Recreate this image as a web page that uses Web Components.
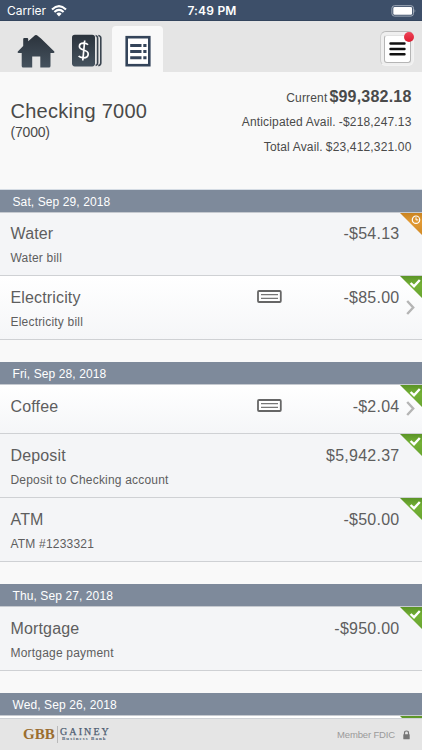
<!DOCTYPE html>
<html lang="en">
<head>
<meta charset="utf-8">
<meta name="viewport" content="width=device-width, initial-scale=1">
<title>Checking 7000</title>
<style>
  html, body {
    margin: 0;
    height: 100%;
    overflow: hidden;
    background: #f9f9f9;
    font-family: "Liberation Sans", Arial, sans-serif;
  }
</style>
</head>
<body>
<bank-app>
  <status-bar slot="top"></status-bar>
  <nav-tabs slot="top"></nav-tabs>
  <account-summary name="Checking 7000" number="(7000)">
    <balance-line label="Current" amount="$99,382.18" main></balance-line>
    <balance-line label="Anticipated Avail." amount="-$218,247.13"></balance-line>
    <balance-line label="Total Avail." amount="$23,412,321.00"></balance-line>
  </account-summary>
  <day-group date="Sat, Sep 29, 2018">
    <transaction-row name="Water" amount="-$54.13" memo="Water bill" status="pending"></transaction-row>
    <transaction-row name="Electricity" amount="-$85.00" memo="Electricity bill" status="cleared" check></transaction-row>
  </day-group>
  <day-group date="Fri, Sep 28, 2018">
    <transaction-row name="Coffee" amount="-$2.04" status="cleared" check></transaction-row>
    <transaction-row name="Deposit" amount="$5,942.37" memo="Deposit to Checking account" status="cleared"></transaction-row>
    <transaction-row name="ATM" amount="-$50.00" memo="ATM #1233321" status="cleared"></transaction-row>
  </day-group>
  <day-group date="Thu, Sep 27, 2018">
    <transaction-row name="Mortgage" amount="-$950.00" memo="Mortgage payment" status="cleared"></transaction-row>
  </day-group>
  <day-group date="Wed, Sep 26, 2018">
    <transaction-row status="cleared" check></transaction-row>
  </day-group>
  <bank-footer slot="bottom"></bank-footer>
</bank-app>

<script>
class BankApp extends HTMLElement {
  constructor () {
    super()
    this.shadow = this.attachShadow({ mode: 'open' })
  }

  connectedCallback () {
    this.shadow.innerHTML =
      /*html*/`
      <style>
        :host {
          display: flex;
          flex-direction: column;
          height: 100vh;
        }

        main {
          flex: 1;
          min-height: 0;
          overflow: hidden;
        }
      </style>

      <slot name="top"></slot>
      <main><slot></slot></main>
      <slot name="bottom"></slot>`
  }
}

class StatusBar extends HTMLElement {
  constructor () {
    super()
    this.shadow = this.attachShadow({ mode: 'open' })
  }

  connectedCallback () {
    this.shadow.innerHTML =
      /*html*/`
      <style>
        :host {
          display: grid;
          grid-template-columns: 1fr auto 1fr;
          align-items: center;
          box-sizing: border-box;
          height: 21px;
          padding: 1px 5px 0 7px;
          background: #3d4f69;
          border-bottom: 1px solid #33445d;
          color: #fff;
          font-family: Inter, "Liberation Sans", sans-serif;
          font-size: 12px;
        }

        .carrier {
          display: flex;
          align-items: center;
          gap: 5px;
          letter-spacing: -.05px;
        }

        .time {
          font-weight: 600;
          letter-spacing: .2px;
        }

        .battery {
          justify-self: end;
        }

        svg {
          display: block;
        }
      </style>

      <div class="carrier">
        <span>Carrier</span>
        <svg width="16" height="12" viewBox="0 0 16 12">
          <g fill="none" stroke="#fff" stroke-width="2.1">
            <path d="M1 4.4Q8-2 15 4.4"/>
            <path d="M3.4 7Q8 2.8 12.6 7"/>
          </g>
          <path d="M5.4 8.7Q8 6.5 10.6 8.7L8 11.4Z" fill="#fff"/>
        </svg>
      </div>
      <div class="time">7:49 PM</div>
      <svg class="battery" width="26" height="12" viewBox="0 0 26 12">
        <rect x=".9" y=".7" width="21.6" height="10.4" rx="2.6" fill="none" stroke="#a2acba"/>
        <rect x="2.3" y="2.1" width="18.8" height="7.6" rx="1.3" fill="#fff"/>
        <path d="M23.6 4Q25.2 5.9 23.6 7.8Z" fill="#a2acba"/>
      </svg>`
  }
}

class NavTabs extends HTMLElement {
  constructor () {
    super()
    this.shadow = this.attachShadow({ mode: 'open' })
  }

  connectedCallback () {
    this.shadow.innerHTML =
      /*html*/`
      <style>
        :host {
          display: flex;
          align-items: flex-end;
          box-sizing: border-box;
          height: 51px;
          padding: 0 8px 0 10px;
          background: #e5e5e5;
        }

        .tab {
          display: flex;
          justify-content: center;
          box-sizing: border-box;
          width: 51px;
          height: 46px;
          padding-top: 8px;
          border-radius: 4px 4px 0 0;
        }

        .tab.active {
          background: #f9f9f9;
        }

        .menu {
          position: relative;
          display: flex;
          align-items: center;
          justify-content: center;
          box-sizing: border-box;
          width: 34px;
          height: 35px;
          margin: 0 0 6px auto;
          border: 1px solid #f3f3f3;
          border-top-color: #b9b9b9;
          border-left-color: #cfcfcf;
          border-radius: 6px;
          background: #efefef;
        }

        .menu div {
          display: flex;
          align-items: center;
          justify-content: center;
          box-sizing: border-box;
          width: 27px;
          height: 28px;
          border: 1px solid #b5b5b5;
          border-top-color: #e2e2e2;
          border-radius: 3px;
          background: #fff;
        }

        .badge {
          position: absolute;
          top: 0;
          right: -1px;
          width: 10px;
          height: 10px;
          border-radius: 50%;
          background: linear-gradient(#ee4458, #db1c30);
        }

        svg {
          display: block;
        }
      </style>

      <svg width="0" height="0" style="position: absolute">
        <linearGradient id="ink" x2="0" y2="1">
          <stop stop-color="#2b333c"/>
          <stop offset="1" stop-color="#45525e"/>
        </linearGradient>
      </svg>
      <div class="tab">
        <svg width="38" height="34" viewBox="0 0 38 34">
          <path fill="url(#ink)" d="M18 1.2Q19 .7 20 1.2L24 4.6L37.3 17.5Q38 18.8 36.5 19H33.5V32Q33.5 33.6 32 33.6H23.3V22.5H15.2V33.6H6.2Q4.7 33.6 4.7 32V19H1.5Q0 18.8.8 17.5L6.2 12V5Q6.2 4 7.2 4H10.2Q11.2 4 11.2 5V7.2Z"/>
        </svg>
      </div>
      <div class="tab">
        <svg width="30" height="33" viewBox="0 0 30 33">
          <rect y=".8" width="23" height="31.6" rx="2.8" fill="url(#ink)"/>
          <path d="M23.6 1.5Q25.6 2 25.6 4V29Q25.6 31 23.6 31.6M26.3 1.5Q28.8 2 28.8 4V29Q28.8 31 26.3 31.6" fill="none" stroke="#3a444f" stroke-width="1.6"/>
          <path d="M16 10.8C15 9.6 13.3 9.2 11.6 9.2C9 9.2 7.4 10.6 7.4 12.5C7.4 17 16.2 15 16.2 19.9C16.2 22.3 14.2 23.8 11.4 23.8C9.4 23.8 7.6 23.2 6.6 22M12.7 6.5L10.8 26.5" fill="none" stroke="#fff" stroke-width="1.7"/>
        </svg>
      </div>
      <div class="tab active">
        <svg width="26" height="33" viewBox="0 0 26 33">
          <rect x="1.7" y="3.2" width="22.6" height="28" fill="#fff" stroke="#34445a" stroke-width="2.6"/>
          <path d="M5.2 11.6H16.5M18.3 11.6H21.5M5.2 17.6H16.5M18.3 17.6H21.5M5.2 23.8H16.5M18.3 23.8H21.5" stroke="#34445a" stroke-width="3"/>
        </svg>
      </div>
      <div class="menu">
        <div>
          <svg width="17" height="15" viewBox="0 0 17 15">
            <path d="M1.5 2.5H15.5M1.5 8H15.5M1.5 13.3H15.5" stroke="#111" stroke-width="2.4" stroke-linecap="round"/>
          </svg>
        </div>
        <span class="badge"></span>
      </div>`
  }
}

class AccountSummary extends HTMLElement {
  constructor () {
    super()
    this.shadow = this.attachShadow({ mode: 'open' })
  }

  connectedCallback () {
    this.shadow.innerHTML =
      /*html*/`
      <style>
        :host {
          display: flex;
          justify-content: space-between;
          box-sizing: border-box;
          height: 118px;
          padding: 0 10.5px;
          border-bottom: 1px solid #d5dce4;
          color: #4a4a4a;
        }

        .account {
          padding-top: 27px;
        }

        h1 {
          margin: 0;
          font-size: 20px;
          font-weight: 400;
          line-height: 24px;
          letter-spacing: .25px;
        }

        .number {
          font-size: 14px;
          line-height: 18px;
          letter-spacing: -.2px;
        }

        .balances {
          display: flex;
          flex-direction: column;
          align-items: flex-end;
          padding-top: 12px;
        }
      </style>

      <div class="account">
        <h1>${this.getAttribute('name')}</h1>
        <div class="number">${this.getAttribute('number')}</div>
      </div>
      <div class="balances"><slot></slot></div>`
  }
}

class BalanceLine extends HTMLElement {
  constructor () {
    super()
    this.shadow = this.attachShadow({ mode: 'open' })
  }

  connectedCallback () {
    this.shadow.innerHTML =
      /*html*/`
      <style>
        :host {
          display: flex;
          align-items: baseline;
          gap: 3px;
          height: 25px;
          font-size: 12px;
          line-height: 27px;
          letter-spacing: .16px;
          white-space: nowrap;
        }

        :host([main]) {
          gap: 2px;
          line-height: 25px;
        }

        :host([main]) .amount {
          font-size: 16px;
          font-weight: 700;
          letter-spacing: .2px;
        }
      </style>

      <span>${this.getAttribute('label')}</span>
      <span class="amount">${this.getAttribute('amount')}</span>`
  }
}

class DayGroup extends HTMLElement {
  constructor () {
    super()
    this.shadow = this.attachShadow({ mode: 'open' })
  }

  connectedCallback () {
    this.shadow.innerHTML =
      /*html*/`
      <style>
        :host {
          display: block;
          margin-bottom: 22px;
        }

        header {
          box-sizing: border-box;
          height: 23px;
          padding-left: 12.5px;
          border-bottom: 1px solid #c6cad0;
          background: #7e8a9b;
          color: #fff;
          font-size: 12px;
          line-height: 24px;
          letter-spacing: .1px;
        }
      </style>

      <header>${this.getAttribute('date')}</header>
      <slot></slot>`
  }
}

class TransactionRow extends HTMLElement {
  constructor () {
    super()
    this.shadow = this.attachShadow({ mode: 'open' })
  }

  text (name) {
    return this.getAttribute(name) || ''
  }

  connectedCallback () {
    this.render()
  }

  render () {
    const pending = this.text('status') === 'pending'
    const mark = pending
      ? '<circle cx="16" cy="6.7" r="3.7" stroke-width="1.2"/><path d="M16 4.3V6.9H18.3" stroke-width="1"/>'
      : '<path d="M10.6 7L14 10.2L19.8 4" stroke-width="2.4"/>'

    this.shadow.innerHTML =
      /*html*/`
      <style>
        :host {
          position: relative;
          display: grid;
          grid-template-columns: 1fr 26px 117px;
          grid-template-rows: 42px auto;
          box-sizing: border-box;
          height: 64px;
          padding: 0 22.5px 0 10.5px;
          border-bottom: 1px solid #cfd1d4;
          background: #f4f5f7;
          color: #5e5e5e;
        }

        :host([check]) {
          background: linear-gradient(#fff, #f5f6f8);
        }

        :host(:not([memo])) {
          height: 49px;
        }

        .name, .amount {
          padding-top: 12px;
          font-size: 16px;
          line-height: 20px;
          letter-spacing: .15px;
        }

        .amount {
          text-align: right;
          letter-spacing: .25px;
        }

        .check {
          padding-top: 14px;
        }

        .memo {
          grid-column: 1 / -1;
          font-size: 12px;
          line-height: 9px;
          letter-spacing: .2px;
        }

        :host([status="pending"]) {
          grid-template-rows: 41px auto;
          height: 63px;
        }

        :host([status="pending"]) .name,
        :host([status="pending"]) .amount {
          padding-top: 11px;
        }

        .corner {
          position: absolute;
          top: 0;
          right: 0;
        }

        .arrow {
          position: absolute;
          top: 24px;
          right: 7px;
        }

        :host(:not([memo])) .arrow {
          top: 16px;
        }

        svg {
          display: block;
        }
      </style>

      <span class="name">${this.text('name')}</span>
      <span class="check">
        ${this.hasAttribute('check') ? `
        <svg width="25" height="13" viewBox="0 0 25 13">
          <rect x="1" y="1" width="22.8" height="11" rx="1" fill="#fff" stroke="#666" stroke-width="1.8"/>
          <path d="M4 4.6H21M4 8.4H21" stroke="#777" stroke-width="1.1"/>
        </svg>` : ''}
      </span>
      <span class="amount">${this.text('amount')}</span>
      <span class="memo">${this.text('memo')}</span>
      <svg class="corner" width="22" height="22" viewBox="0 0 22 22">
        <linearGradient id="fold" x2="0" y2="1">
          <stop stop-color="${pending ? '#c98320' : '#5b9427'}"/>
          <stop offset=".4" stop-color="${pending ? '#e29a35' : '#74b136'}"/>
          <stop offset="1" stop-color="${pending ? '#d18a26' : '#68a42f'}"/>
        </linearGradient>
        <path d="M0 0H22V22Z" fill="url(#fold)"/>
        <g fill="none" stroke="#fff">${mark}</g>
      </svg>
      ${this.hasAttribute('check') ? `
      <svg class="arrow" width="9" height="15" viewBox="0 0 9 15">
        <path d="M1.2 1L7.2 7.5L1.2 14" fill="none" stroke="#b5b5b5" stroke-width="2.4"/>
      </svg>` : ''}`
  }
}

class BankFooter extends HTMLElement {
  constructor () {
    super()
    this.shadow = this.attachShadow({ mode: 'open' })
  }

  connectedCallback () {
    this.shadow.innerHTML =
      /*html*/`
      <style>
        :host {
          display: flex;
          align-items: center;
          justify-content: space-between;
          box-sizing: border-box;
          height: 32px;
          padding: 0 12px 0 23px;
          border-top: 1px solid #cfd2d6;
          background: #e5e5e5;
        }

        .logo {
          display: flex;
          align-items: center;
          font-family: "Liberation Serif", serif;
          font-weight: 700;
        }

        .short {
          padding-right: 2px;
          border-right: 1px solid #b9b9b9;
          color: #9b6e2f;
          font-size: 15px;
          line-height: 17px;
          letter-spacing: .1px;
        }

        .full {
          padding-left: 2px;
          color: #4e5d72;
        }

        .full div {
          font-size: 10px;
          font-weight: 400;
          line-height: 9px;
          letter-spacing: 2.1px;
          -webkit-text-stroke: .25px;
        }

        .full small {
          display: block;
          padding-left: 2px;
          font-size: 5px;
          line-height: 6px;
          letter-spacing: 1.05px;
        }

        .member {
          display: flex;
          align-items: center;
          gap: 8px;
          color: #9a9a9a;
          font-size: 9.5px;
          letter-spacing: -.15px;
        }

        svg {
          display: block;
        }
      </style>

      <div class="logo">
        <div class="short">GBB</div>
        <div class="full">
          <div>GAINEY</div>
          <small>Business Bank</small>
        </div>
      </div>
      <div class="member">
        <span>Member FDIC</span>
        <svg width="7" height="10" viewBox="0 0 7 10">
          <path d="M1.5 5V3Q1.5 1 3.5 1Q5.5 1 5.5 3V5" fill="none" stroke="#777" stroke-width="1.2"/>
          <rect x=".3" y="4.3" width="6.4" height="5" rx=".5" fill="#777"/>
        </svg>
      </div>`
  }
}

customElements.define('bank-app', BankApp)
customElements.define('status-bar', StatusBar)
customElements.define('nav-tabs', NavTabs)
customElements.define('account-summary', AccountSummary)
customElements.define('balance-line', BalanceLine)
customElements.define('day-group', DayGroup)
customElements.define('transaction-row', TransactionRow)
customElements.define('bank-footer', BankFooter)
</script>
</body>
</html>
